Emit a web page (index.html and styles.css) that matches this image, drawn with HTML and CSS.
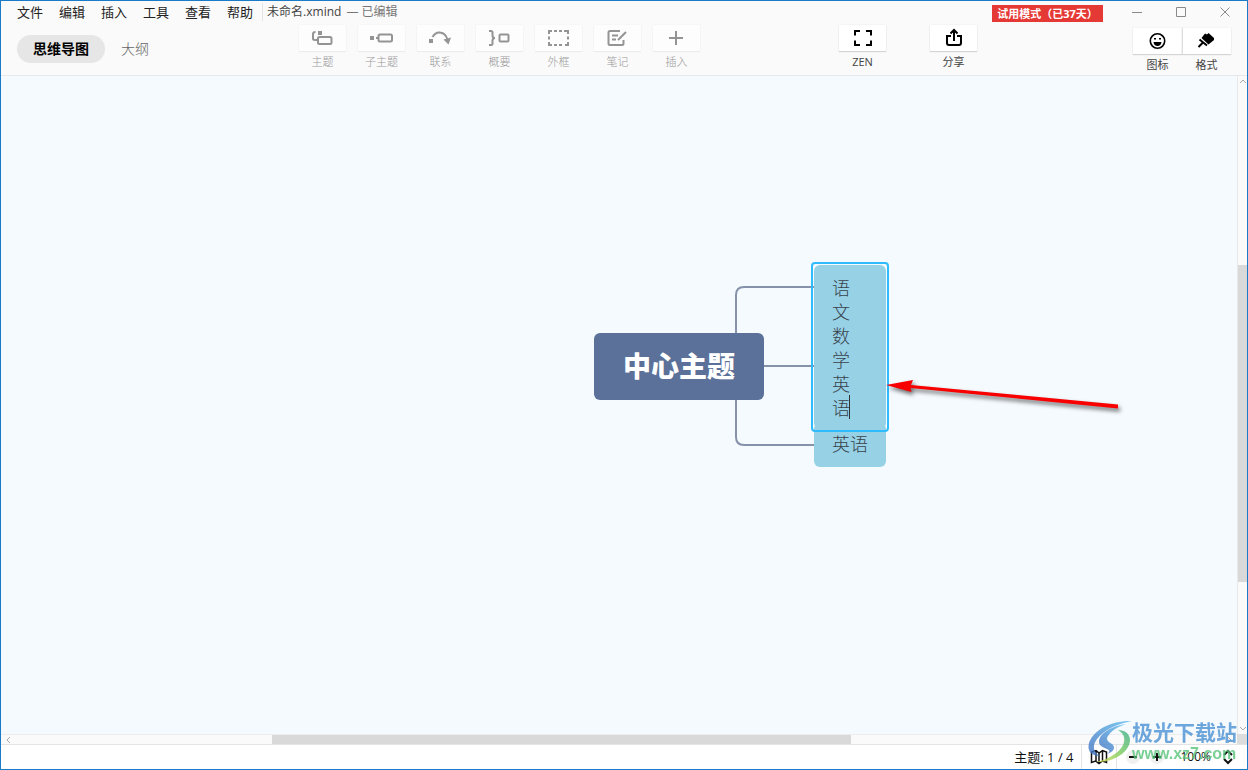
FILE: index.html
```html
<!DOCTYPE html>
<html lang="zh-CN">
<head>
<meta charset="utf-8">
<title>未命名.xmind</title>
<link rel="stylesheet" href="styles.css">
</head>
<body>
<div class="window">
  <header class="header">
    <div class="titlebar">
      <nav class="menu">
        <button>文件</button><button>编辑</button><button>插入</button><button>工具</button><button>查看</button><button>帮助</button>
      </nav>
      <div class="doc"><span class="doc-name">未命名.xmind</span><span class="doc-state">— 已编辑</span></div>
      <button class="trial">试用模式（已37天）</button>
      <div class="win-buttons">
        <button aria-label="最小化"><svg width="10" height="10"><path d="M0 5.500H10"/></svg></button>
        <button aria-label="最大化"><svg width="10" height="10"><path d="M.5.5h9v9h-9z"/></svg></button>
        <button aria-label="关闭"><svg width="10" height="10"><path d="M.5.5l9 9M9.500.5l-9 9"/></svg></button>
      </div>
    </div>
    <div class="toolbar">
      <div class="modes">
        <button class="mode active">思维导图</button>
        <button class="mode">大纲</button>
      </div>
      <div class="tools muted">
        <button class="tool"><span class="face"><svg width="24" height="20" viewBox="0 0 24 20"><path class="ln" d="M4.500 4Q2 4 2 6v4.500Q2 12 4 12h2"/><rect class="ln" x="7" y="9" width="13.500" height="7" rx="1.500"/><path class="fl" d="M7 3h4v4H7z"/></svg></span><span>主题</span></button>
        <button class="tool"><span class="face"><svg width="24" height="20" viewBox="0 0 24 20"><path class="fl" d="M0 8h4v4H0z"/><path class="ln" d="M6 10h2"/><rect class="ln" x="8.500" y="6.500" width="13.500" height="7" rx="1.500"/></svg></span><span>子主题</span></button>
        <button class="tool"><span class="face"><svg width="24" height="20" viewBox="0 0 24 20"><path class="ln" d="M3.500 9C6 5 8 4 11 4.500c4 .5 6.500 3 7.500 7.500"/><path class="fl" d="M0 11h4v4H0zM14.500 11.500l7.500-2-2.500 7z"/></svg></span><span>联系</span></button>
        <button class="tool"><span class="face"><svg width="24" height="20" viewBox="0 0 24 20"><path class="ln" d="M1 3h2q1.500 0 1.500 1.500v3Q4.500 10 7 10q-2.500 0-2.500 2.500v3Q4.500 17 3 17H1"/><rect class="ln" x="11.500" y="6.500" width="9" height="7" rx="1"/></svg></span><span>概要</span></button>
        <button class="tool"><span class="face"><svg width="24" height="20" viewBox="0 0 24 20"><path class="ln" d="M2 6V3h3M7 3h3M12 3h3M17 3h4v3M21 8.500v3M21 14v3h-3M15 17h-3M10 17H7M5 17H2v-3M2 11.500v-3"/></svg></span><span>外框</span></button>
        <button class="tool"><span class="face"><svg width="24" height="20" viewBox="0 0 24 20"><path class="ln" d="M14 3H4Q2.500 3 2.500 4.500v11Q2.500 17 4 17h12q1.500 0 1.500-1.500V12M6 7.500h6M6 11.500h4M12 12l8-8"/></svg></span><span>笔记</span></button>
        <button class="tool"><span class="face"><svg width="24" height="20" viewBox="0 0 24 20"><path class="ln" d="M11 3v14M4 10h14"/></svg></span><span>插入</span></button>
      </div>
      <div class="tools wide">
        <button class="tool"><span class="face"><svg width="24" height="20" viewBox="0 0 24 20"><path class="ln" d="M4 7.500V3h5M15 3h5v4.500M20 12.500V17h-5M9 17H4v-4.500"/></svg></span><span>ZEN</span></button>
        <button class="tool"><span class="face"><svg width="24" height="20" viewBox="0 0 24 20"><path class="ln" d="M9 8H5v7q0 2 2 2h10q2 0 2-2V8h-4M12 13V2M8.500 5.500L12 2l3.500 3.500"/></svg></span><span>分享</span></button>
      </div>
      <div class="tools joined">
        <button class="tool"><span class="face"><svg width="24" height="20" viewBox="0 0 24 20"><circle class="ln thin" cx="11.500" cy="10" r="7.200"/><path class="fl" d="M7.500 11h8q-.5 4-4 4t-4-4zM8 7h2v1.500H8zM13 7h2v1.500h-2z"/></svg></span><span>图标</span></button>
        <button class="tool"><span class="face"><svg width="24" height="20" viewBox="0 0 24 20"><path class="fl" d="M10 2.500l2 1 1.500-1.500 5.500 5v2l-5.500 4.500L6.500 7z"/><path class="ln" d="M4.500 8.500l7.500 6M8 11.500L3.500 16"/></svg></span><span>格式</span></button>
      </div>
    </div>
  </header>

  <main class="workspace">
    <div class="canvas">
      <svg class="links" width="300" height="220"><path d="M143 100V19q0-8 8-8h71M150 90h72M143 100v61q0 8 8 8h71"/></svg>
      <div class="node root">中心主题</div>
      <div class="node child">英语</div>
      <div class="editor"><textarea rows="6" aria-label="主题文字">语
文
数
学
英
语</textarea><span class="caret"></span></div>
      <svg class="arrow" width="250" height="50" viewBox="0 0 250 50"><path d="M2 11L29 6l-2 5 207 19.500v4L26.500 14l1 4z"/></svg>
    </div>
    <div class="vbar">
      <svg width="8" height="6"><path d="M1 5l3-3 3 3"/></svg>
      <div class="vtrack"><div class="vthumb"></div></div>
      <svg width="8" height="6"><path d="M1 1l3 3 3-3"/></svg>
    </div>
    <div class="hbar">
      <svg width="6" height="8"><path d="M5 1L2 4l3 3"/></svg>
      <div class="htrack"><div class="hthumb"></div></div>
      <svg width="6" height="8"><path d="M1 1l3 3-3 3"/></svg>
    </div>
    <div class="corner"></div>
  </main>

  <footer class="status">
    <span class="count">主题: 1 / 4</span>
    <button class="map" aria-label="导航图"><svg width="18" height="16" viewBox="0 0 18 16"><path d="M1.500 3L6 1.500 9 4l3.500-2.500 4 1.500v10.500L12.500 12 9 14.500 5.500 12l-4 1.500zM6 2v10M9 4v10M12.500 2v10"/></svg></button>
    <div class="zoom">
      <button class="round" aria-label="缩小"><svg width="10" height="10"><path d="M1 5h8"/></svg></button>
      <button class="round" aria-label="放大"><svg width="10" height="10"><path d="M1 5h8M5 1v8"/></svg></button>
      <button class="level"><span>100%</span><svg width="10" height="16"><path d="M1 6l4-4 4 4M1 10l4 4 4-4"/></svg></button>
    </div>
  </footer>

  <div class="watermark">
    <svg width="44" height="44" viewBox="0 0 44 44">
      <defs>
        <linearGradient id="blue" x1="0" y1="1" x2="1" y2="0"><stop offset="0" stop-color="#3f6fc0"/><stop offset="1" stop-color="#62c0ee"/></linearGradient>
        <linearGradient id="green" x1="0" y1="1" x2="1" y2="0"><stop offset="0" stop-color="#e3e054"/><stop offset=".5" stop-color="#7bcb5b"/><stop offset="1" stop-color="#38ae8e"/></linearGradient>
      </defs>
      <path fill="url(#blue)" d="M44 1C25 0 6 9 1 23c-2 8 2 13 11 13C5 32 4 26 9 19 17 9 29 4 44 1z"/>
      <path fill="url(#blue)" d="M38 4C23 6 11 14 11 22c0 3 3 5 8 7 3 1 3 3 0 5 7-2 9-7 5-10-5-3-6-5-4-8 3-5 9-9 18-12z"/>
      <path fill="url(#green)" d="M30 10c7 0 12 4 12 10 0 12-17 23-34 22 11-2 26-10 28-20 1-5-1-9-6-12z"/>
    </svg>
    <div class="wm-text"><span class="wm-name">极光下载站</span><span class="wm-url">www.xz7.com</span></div>
  </div>
</div>
</body>
</html>
```
FILE: styles.css
```css
* { box-sizing: border-box; }
body { margin: 0; font: 13px/18px "Open Sans", "Noto Sans CJK SC", sans-serif; color: #222; }
button { border: 0; padding: 0; background: none; font: inherit; color: inherit; }
svg { display: block; fill: none; flex: none; }
.window { position: relative; display: flex; flex-direction: column; height: 100vh; border: 1px solid #1a7bc8; }

.header { background: #fafafa; border-bottom: 1px solid #e6e8ea; }
.titlebar { display: flex; align-items: flex-start; height: 24px; padding: 0 17px 0 16px; }
.menu { display: flex; gap: 16px; padding: 2px 9px 0 0; }
.doc { display: flex; gap: 5px; margin-top: 2px; padding-left: 4px; border-left: 1px solid #e4e4e4; font-size: 12px; color: #444; }
.doc-state { color: #777; }
.trial { margin: 4px 29px 0 auto; width: 111px; height: 17px; background: #e53935; color: #fff; font-size: 11px; line-height: 17px; font-weight: 700; white-space: nowrap; }
.win-buttons { display: flex; gap: 34px; padding-top: 6px; }
.win-buttons svg { stroke: #8a8a8a; }

.toolbar { display: grid; grid-template-columns: auto 150fr auto 139fr auto 156fr auto; align-items: start; padding: 0 16px; height: 50px; }
.modes { grid-column: 1; display: flex; gap: 16px; margin-top: 10px; }
.mode { height: 28px; font-size: 14px; font-weight: 300; color: #666; }
.mode.active { padding: 0 16px; border-radius: 14px; background: #e6e6e6; color: #000; font-weight: 700; }
.tools { display: flex; gap: 12px; grid-column: 3; }
.tools.wide { grid-column: 5; gap: 44px; }
.tools.joined { grid-column: 7; gap: 0; margin-top: 3px; }
.tool { display: flex; flex-direction: column; align-items: center; gap: 2px; width: 47px; font-size: 11px; color: #444; }
.face { display: flex; align-items: center; justify-content: center; width: 100%; height: 26px; background: #fff; box-shadow: 0 1px 1px #d4d4d4, 0 0 1px #d8d8d8; color: #000; }
.joined .tool { width: 49px; }
.joined .tool + .tool .face { border-left: 1px solid #dedede; }
.muted .tool { color: #999; font-weight: 300; }
.muted .face { background: #fdfdfd; color: #949494; box-shadow: 0 1px 1px #ececec, 0 0 1px #e8e8e8; }
.ln { stroke: currentColor; stroke-width: 2; }
.thin { stroke-width: 1.6; }
.fl { fill: currentColor; }

.workspace { flex: 1; min-height: 0; display: grid; grid-template: 1fr 10px / 1fr 10px; }
.canvas { position: relative; overflow: hidden; background: #f5fafe; }
.links { position: absolute; left: 592px; top: 200px; stroke: #8592aa; stroke-width: 2; }
.node { position: absolute; border-radius: 6px; background: #97d1e6; color: #38424c; font-size: 18px; font-weight: 300; }
.root { left: 593px; top: 257px; padding: 0 29px; line-height: 67px; background: #5b7199; color: #fff; font-size: 28px; font-weight: 900; }
.child { left: 813px; top: 347px; padding: 0 18px 2px; line-height: 42px; }
.editor { position: absolute; left: 810px; top: 186px; padding: 1px; border: 2px solid #2ebcff; border-radius: 4px; }
.editor textarea { display: block; width: 72px; height: 164px; padding: 10px 18px 8px; border: 0; border-radius: 6px; background: #97d1e6; color: #38424c; font: 300 18px/24px "Noto Sans CJK SC", sans-serif; resize: none; overflow: hidden; outline: 0; }
.caret { position: absolute; left: 36px; bottom: 11px; width: 1px; height: 24px; background: #333; }
.arrow { position: absolute; left: 883px; top: 298px; overflow: visible; fill: #f80000; filter: drop-shadow(2px 3px 2px #00000090); }

.vbar, .hbar { display: flex; align-items: center; background: #fafafa; }
.vbar { flex-direction: column; padding: 2px 0; border-left: 1px solid #e8e8e8; }
.hbar { padding: 0 4px; border-top: 1px solid #ececec; }
.vbar svg, .hbar svg { stroke: #aaa; }
.vtrack { flex: 1; align-self: stretch; padding-top: 181px; }
.vthumb { height: 317px; background: #d9d9d9; }
.htrack { flex: 1; align-self: stretch; display: flex; padding-left: 261px; }
.hthumb { width: 579px; background: #d9d9d9; }
.corner { background: #dcdcdc; }

.status { display: flex; align-items: stretch; justify-content: flex-end; height: 25px; border-top: 1px solid #e4e4e4; background: #fff; line-height: 24px; color: #111; }
.count { padding-right: 8px; }
.map { display: flex; align-items: center; padding: 0 8px; border: solid #e4e4e4; border-width: 0 1px; }
.map svg, .zoom svg { stroke: #111; stroke-width: 2; }
.map svg { stroke-width: 1.5; }
.zoom { display: flex; align-items: center; gap: 10px; padding: 0 14px 0 9px; }
.round { display: grid; place-items: center; width: 14px; height: 14px; border-radius: 7px; background: #f0f0f0; }
.level { display: flex; align-items: center; gap: 12px; margin-left: 6px; font-size: 12px; }

.watermark { position: absolute; right: 10px; bottom: 5px; display: flex; opacity: .8; pointer-events: none; }
.wm-text { display: flex; flex-direction: column; font-weight: 700; }
.wm-name { font-size: 21px; line-height: 24px; color: #4b92d4; }
.wm-url { font: 700 16px/20px "Liberation Sans", sans-serif; color: #58c47a; }
```
